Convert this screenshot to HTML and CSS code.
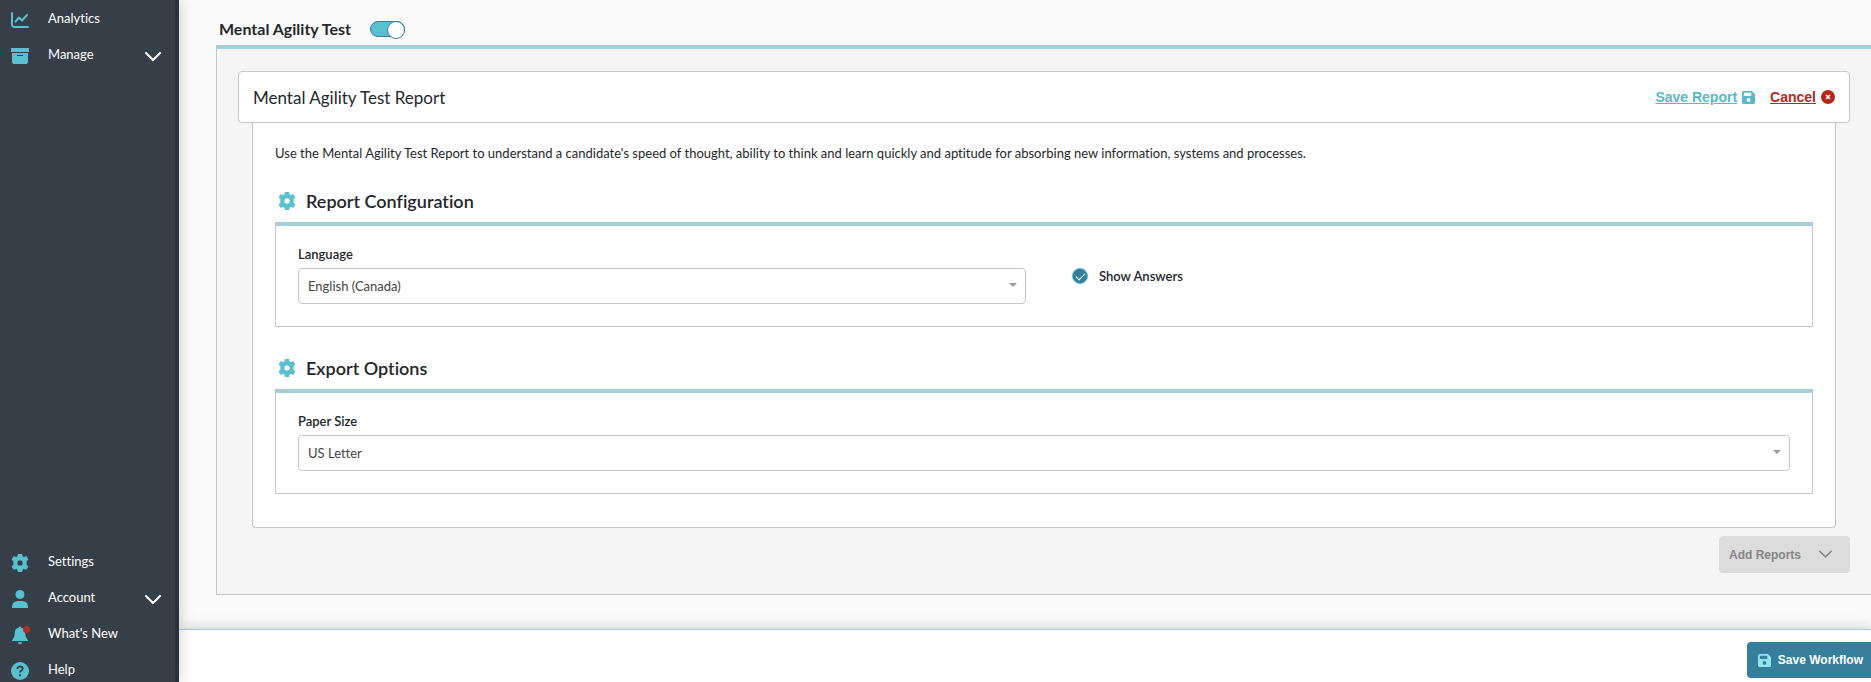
FILE: index.html
```
<!DOCTYPE html>
<html lang="en">
<head>
    <meta charset="UTF-8">
    <meta name="viewport" content="width=device-width, initial-scale=1.0">
    <title>Mental Agility Test Report</title>
    <link rel="stylesheet" href="styles.css">
</head>
<body>

<!-- shared icons -->
<svg class="sprite" aria-hidden="true">
    <symbol id="gear" viewBox="0 0 18 18">
        <path fill-rule="evenodd" d="M7.2 0h3.6l.5 2.4 1.6.9 2.4-.8 1.8 3.1-1.8 1.6v3.6l1.8 1.6-1.8 3.1-2.4-.8-1.6.9-.5 2.4H7.2l-.5-2.4-1.6-.9-2.4.8L.9 12.4l1.8-1.6V7.2L.9 5.6l1.8-3.1 2.4.8 1.6-.9zM9 6a3 3 0 1 0 0 6 3 3 0 0 0 0-6z" stroke="currentColor" stroke-width=".6" stroke-linejoin="round"/>
    </symbol>
    <symbol id="chevron" viewBox="0 0 16 10">
        <path d="M1 1l7 7 7-7" fill="none" stroke="currentColor" stroke-width="2" stroke-linecap="round"/>
    </symbol>
    <symbol id="save" viewBox="0 0 14 14">
        <path fill-rule="evenodd" d="M2 0h8.600L14 3.400V12a2 2 0 0 1-2 2H2a2 2 0 0 1-2-2V2a2 2 0 0 1 2-2zM2 2v3.500h8V2zM7 7.600a2 2 0 1 0 0 4 2 2 0 0 0 0-4z"/>
    </symbol>
</svg>

<nav class="sidebar">
    <div class="nav-group">
        <a class="nav-item" href="#">
            <svg class="nav-icon" viewBox="0 0 18 18"><path d="M1 2v11.500a2.500 2.500 0 0 0 2.500 2.500H17M4.500 10.500l3.500-4 3 3L16 4" fill="none" stroke="currentColor" stroke-width="2" stroke-linecap="round" stroke-linejoin="round"/></svg>
            <span class="nav-text">Analytics</span>
        </a>
        <a class="nav-item" href="#">
            <svg class="nav-icon" viewBox="0 0 18 18"><path fill-rule="evenodd" d="M0 1h18v4H0zM1 6h16v9a2 2 0 0 1-2 2H3a2 2 0 0 1-2-2zM6 8v1h6V8z"/></svg>
            <span class="nav-text">Manage</span>
            <svg class="nav-arrow"><use href="#chevron"/></svg>
        </a>
    </div>
    <div class="nav-group nav-bottom">
        <a class="nav-item" href="#">
            <svg class="nav-icon"><use href="#gear"/></svg>
            <span class="nav-text">Settings</span>
        </a>
        <a class="nav-item" href="#">
            <svg class="nav-icon" viewBox="0 0 18 18"><circle cx="9" cy="4.500" r="4.500"/><path d="M1 18v-1.500A5.500 5.500 0 0 1 6.500 11h5a5.500 5.500 0 0 1 5.500 5.500V18z"/></svg>
            <span class="nav-text">Account</span>
            <svg class="nav-arrow"><use href="#chevron"/></svg>
        </a>
        <a class="nav-item" href="#">
            <svg class="nav-icon" viewBox="0 0 18 18"><path d="M8 1.500a1 1 0 0 1 2 0c3 .6 4.300 3 4.300 5.500 0 3 .7 4.500 2.700 7.500v.5H1v-.5C3 11.500 3.700 10 3.700 7c0-2.500 1.300-4.900 4.300-5.500zM7 16.300h4a2 2 0 0 1-4 0z"/><circle class="dot" cx="15.500" cy="3.500" r="3.500"/></svg>
            <span class="nav-text">What's New</span>
        </a>
        <a class="nav-item" href="#">
            <svg class="nav-icon" viewBox="0 0 18 18"><circle cx="9" cy="9" r="9"/><path d="M6.500 7c0-3.400 5.200-3 5.200-.3C11.700 8.500 9 8.500 9 10.500M9 12.300v1.900" fill="none" stroke="#363e47" stroke-width="1.900"/></svg>
            <span class="nav-text">Help</span>
        </a>
    </div>
</nav>

<main class="main">
    <div class="content">
        <div class="test-header">
            <label for="testToggle">Mental Agility Test</label>
            <input type="checkbox" id="testToggle" class="toggle" checked>
        </div>

        <div class="panel">
            <div class="report-header">
                <h1>Mental Agility Test Report</h1>
                <div class="report-actions">
                    <a class="save-link" href="#"><span>Save Report</span><svg class="save-icon"><use href="#save"/></svg></a>
                    <a class="cancel-link" href="#"><span>Cancel</span><svg class="cancel-icon" viewBox="0 0 14 14"><circle cx="7" cy="7" r="7"/><path d="M5 5l4 4M9 5l-4 4" stroke="#fff" stroke-width="1.500"/></svg></a>
                </div>
            </div>

            <div class="report-body">
                <p class="description">Use the Mental Agility Test Report to understand a candidate's speed of thought, ability to think and learn quickly and aptitude for absorbing new information, systems and processes.</p>

                <section>
                    <h2><svg class="section-icon"><use href="#gear"/></svg>Report Configuration</h2>
                    <div class="section-box two-columns">
                        <div class="field">
                            <label for="language">Language</label>
                            <div class="select-wrap">
                                <select id="language">
                                    <option>English (Canada)</option>
                                </select>
                            </div>
                        </div>
                        <div class="check-field">
                            <input type="checkbox" id="showAnswers" class="check" checked>
                            <label for="showAnswers">Show Answers</label>
                        </div>
                    </div>
                </section>

                <section>
                    <h2><svg class="section-icon"><use href="#gear"/></svg>Export Options</h2>
                    <div class="section-box">
                        <div class="field">
                            <label for="paperSize">Paper Size</label>
                            <div class="select-wrap">
                                <select id="paperSize">
                                    <option>US Letter</option>
                                </select>
                            </div>
                        </div>
                    </div>
                </section>
            </div>

            <button class="add-reports" disabled>Add Reports<svg class="add-arrow"><use href="#chevron"/></svg></button>
        </div>
    </div>

    <footer class="footer">
        <button class="save-workflow"><svg class="save-icon"><use href="#save"/></svg>Save Workflow</button>
    </footer>
</main>

</body>
</html>
```

FILE: styles.css
```
* {
    box-sizing: border-box;
}
body {
    display: flex;
    height: 100vh;
    margin: 0;
    overflow: hidden;
    background: #fafafa;
    color: #24272b;
    font-family: Lato, sans-serif;
    font-size: 13px;
    font-variant-ligatures: none;
}
svg {
    display: block;
    flex: none;
    fill: currentColor;
}
.sprite {
    position: absolute;
    width: 0;
    height: 0;
}

/* sidebar */
.sidebar {
    display: flex;
    flex-direction: column;
    justify-content: space-between;
    flex: none;
    width: 179px;
    padding-top: 2px;
    background: #363e47;
    border-right: 4px solid #2d3037;
    box-shadow: 0 0 14px rgba(0, 0, 0, 0.2);
    z-index: 2;
}
.nav-bottom {
    margin-bottom: -7px;
}
.nav-item {
    display: flex;
    align-items: center;
    height: 36px;
    padding: 0 14px 0 11px;
    color: #fff;
    text-decoration: none;
}
.nav-icon {
    width: 18px;
    height: 18px;
    margin-right: 19px;
    color: #59c0cf;
    overflow: visible;
}
.nav-icon .dot {
    fill: #b52b1d;
}
.nav-text {
    flex: 1;
    padding-bottom: 4px;
}
.nav-arrow {
    width: 16px;
    height: 10px;
    margin-top: 2px;
}

/* main area */
.main {
    display: flex;
    flex-direction: column;
    flex: 1;
    min-width: 0;
}
.content {
    flex: 1;
    padding-left: 37px;
}
.test-header {
    display: flex;
    align-items: center;
    gap: 19px;
    height: 45px;
    padding: 12px 3px 0;
    font-size: 16px;
    font-weight: bold;
}
.toggle {
    appearance: none;
    width: 35px;
    height: 16px;
    margin: 0;
    border: 1px solid #367f9c;
    border-radius: 8px;
    background: #59c0cf;
}
.toggle::before {
    content: "";
    display: block;
    width: 16px;
    height: 16px;
    margin: -1px -1px 0 auto;
    border: 1px solid #367f9c;
    border-radius: 50%;
    background: #fff;
}
.panel {
    display: flex;
    flex-direction: column;
    padding: 22px 21px 21px;
    border: 1px solid #c4c6c9;
    border-top: 4px solid #a6d0d7;
    border-right: none;
    background: #f5f5f5;
}

/* report card */
.report-header {
    display: flex;
    align-items: center;
    justify-content: space-between;
    height: 52px;
    padding: 0 14px;
    border: 1px solid #c4c6c9;
    border-radius: 4px;
    background: #fff;
}
h1 {
    margin: 0;
    font-size: 17px;
    font-weight: normal;
}
.report-actions {
    display: flex;
    gap: 15px;
    font: bold 14px "Liberation Sans", Arial, sans-serif;
}
.report-actions a {
    display: flex;
    align-items: center;
    gap: 5px;
}
.save-link {
    color: #59b9c9;
}
.cancel-link {
    color: #b02a1c;
}
.save-icon {
    width: 13px;
    height: 13px;
}
.cancel-icon {
    width: 14px;
    height: 14px;
}
.report-body {
    margin: 0 14px;
    padding: 20px 22px 33px;
    border: 1px solid #c4c6c9;
    border-top: none;
    border-radius: 0 0 4px 4px;
    background: #fff;
}
.description {
    margin: 0;
    line-height: 20px;
}
section {
    margin-top: 24px;
}
section + section {
    margin-top: 27px;
}
h2 {
    display: flex;
    align-items: center;
    gap: 10px;
    height: 28px;
    margin: 0 0 7px;
    padding-left: 3px;
    font-size: 18px;
    font-weight: 600;
}
.section-icon {
    width: 18px;
    height: 18px;
    color: #59c0cf;
}
.section-box {
    padding: 18px 22px 22px;
    border: 1px solid #c4c6c9;
    border-top: 4px solid #a6d0d7;
}
.two-columns {
    display: grid;
    grid-template-columns: 1fr 1fr;
    gap: 36px;
}
.field label {
    display: block;
    margin-bottom: 4px;
    line-height: 20px;
    font-weight: 600;
}
.select-wrap {
    position: relative;
}
.select-wrap::after {
    content: "";
    position: absolute;
    top: 15px;
    right: 9px;
    border: 4px solid transparent;
    border-top-color: #999;
    border-bottom: none;
}
select {
    appearance: none;
    display: block;
    width: 100%;
    height: 36px;
    padding: 0 9px;
    border: 1px solid #c4c6c9;
    border-radius: 4px;
    background: #fff;
    color: #444;
    font: inherit;
}
.check-field {
    display: flex;
    align-items: center;
    gap: 11px;
    height: 20px;
    margin-top: 22px;
    padding-left: 10px;
    font-weight: 600;
}
.check {
    appearance: none;
    width: 16px;
    height: 16px;
    margin: 0;
    border: 1px solid #59b9c9;
    border-radius: 50%;
    background: #367f9c;
}
.check::before {
    content: "";
    display: block;
    width: 8px;
    height: 4px;
    margin: 4px 3px;
    border: solid #fff;
    border-width: 0 0 1px 1px;
    transform: rotate(-45deg);
}

/* buttons */
button {
    display: flex;
    align-items: center;
    border: none;
    border-radius: 4px;
    font: bold 12px "Liberation Sans", Arial, sans-serif;
}
.add-reports {
    align-self: flex-end;
    gap: 18px;
    height: 37px;
    margin-top: 8px;
    padding: 0 18px 0 10px;
    background: #dcdcdc;
    color: #868686;
}
.add-arrow {
    width: 13px;
    height: 9px;
}
.footer {
    display: flex;
    align-items: flex-start;
    justify-content: flex-end;
    height: 53px;
    padding-top: 12px;
    border-top: 1px solid #a9cbd6;
    background: #fff;
    box-shadow: 0 0 14px rgba(0, 0, 0, 0.2);
}
.save-workflow {
    gap: 7px;
    height: 36px;
    padding: 0 8px 0 11px;
    border-radius: 4px 0 0 4px;
    background: #367f9c;
    color: #fff;
}
.save-workflow .save-icon {
    color: #93e3f5;
}
```
